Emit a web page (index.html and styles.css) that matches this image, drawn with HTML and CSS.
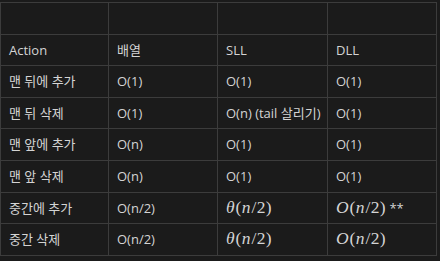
FILE: index.html
```html
<!DOCTYPE html>
<html>
<head>
<meta charset="utf-8">
<link rel="stylesheet" href="styles.css">
</head>
<body>
<table class="grid">
  <colgroup>
    <col class="c1"><col class="c2"><col class="c3"><col class="c4">
  </colgroup>
  <thead>
    <tr><th></th><th></th><th></th><th></th></tr>
  </thead>
  <tbody>
    <tr><td>Action</td><td>배열</td><td>SLL</td><td>DLL</td></tr>
    <tr><td>맨 뒤에 추가</td><td>O(1)</td><td>O(1)</td><td>O(1)</td></tr>
    <tr><td>맨 뒤 삭제</td><td>O(1)</td><td>O(n) (tail 살리기)</td><td>O(1)</td></tr>
    <tr><td>맨 앞에 추가</td><td>O(n)</td><td>O(1)</td><td>O(1)</td></tr>
    <tr><td>맨 앞 삭제</td><td>O(n)</td><td>O(1)</td><td>O(1)</td></tr>
    <tr><td>중간에 추가</td><td>O(n/2)</td><td><span class="math"><i>θ</i>(<i>n</i>/2)</span></td><td><span class="math"><i>O</i>(<i>n</i>/2)</span> **</td></tr>
    <tr><td>중간 삭제</td><td>O(n/2)</td><td><span class="math"><i>θ</i>(<i>n</i>/2)</span></td><td><span class="math"><i>O</i>(<i>n</i>/2)</span></td></tr>
  </tbody>
</table>
</body>
</html>
```
FILE: styles.css
```css
html, body {
  margin: 0;
  padding: 0;
  background: #1b1b1b;
}
body {
  padding-top: 2px;
  font-family: "Open Sans", "Noto Sans CJK KR", sans-serif;
  font-size: 13px;
  color: #d4d4d4;
}
.grid {
  border-collapse: collapse;
  table-layout: fixed;
  width: 436px;
}
.c1 { width: 108px; }
.c2 { width: 109px; }
.c3 { width: 110px; }
.c4 { width: 109px; }
.grid th, .grid td {
  border: 1px solid #3c3c3c;
  padding: 5px 8px;
  height: 20.6px;
  line-height: 20.6px;
  text-align: left;
  font-weight: normal;
  white-space: nowrap;
}
.math {
  font-family: "Liberation Serif", "DejaVu Serif", serif;
  font-size: 17.5px;
  line-height: 1;
  letter-spacing: 0.4px;
}
.math i {
  font-style: italic;
  padding-right: 0.5px;
}
```
